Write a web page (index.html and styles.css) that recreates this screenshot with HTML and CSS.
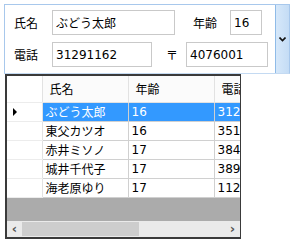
FILE: index.html
```html
<!DOCTYPE html>
<html lang="ja">
<head>
  <meta charset="UTF-8" />
  <meta name="viewport" content="width=device-width, initial-scale=1.0"/>
  <title>会員一覧</title>
  <link rel="stylesheet" href="styles.css">
</head>
<body>

<div class="panel">
  <div class="fields">
    <div class="row">
      <span class="lbl">氏名</span>
      <input class="box name" type="text" value="ぶどう太郎" />
      <span class="lbl age-lbl">年齢</span>
      <input class="box age" type="text" value="16" />
    </div>
    <div class="row">
      <span class="lbl">電話</span>
      <input class="box tel" type="text" value="31291162" />
      <span class="lbl zip-lbl">〒</span>
      <input class="box zip" type="text" value="4076001" />
    </div>
  </div>
  <button class="drop">
    <svg width="7" height="5" viewBox="0 0 7 5"><path d="M0.5 0.5 L3.5 3.5 L6.5 0.5" fill="none" stroke="#111" stroke-width="1.6"/></svg>
  </button>
</div>

<div class="grid">
  <div class="grid-inner">
    <table>
      <colgroup>
        <col class="c-head"><col class="c-col"><col class="c-col"><col class="c-col">
      </colgroup>
      <thead>
        <tr><th class="corner"></th><th>氏名</th><th>年齢</th><th>電話</th></tr>
      </thead>
      <tbody>
        <tr class="sel"><td class="rh"><span class="arrow"></span></td><td>ぶどう太郎</td><td>16</td><td>31291162</td></tr>
        <tr><td class="rh"></td><td>東父カツオ</td><td>16</td><td>35124478</td></tr>
        <tr><td class="rh"></td><td>赤井ミソノ</td><td>17</td><td>38457721</td></tr>
        <tr><td class="rh"></td><td>城井千代子</td><td>17</td><td>38961034</td></tr>
        <tr><td class="rh"></td><td>海老原ゆり</td><td>17</td><td>11258830</td></tr>
      </tbody>
    </table>
    <div class="workspace"></div>
    <div class="hscroll">
      <span class="arr">&lsaquo;</span>
      <div class="track"><div class="thumb"></div></div>
      <span class="arr">&rsaquo;</span>
    </div>
  </div>
</div>

</body>
</html>
```

FILE: styles.css
```css
* {
  margin: 0; padding: 0; box-sizing: border-box;
}

body {
  background: #fff;
  color: #000;
  font-family: 'DejaVu Sans', 'Noto Sans CJK JP', sans-serif;
  font-size: 12px;
}

.panel {
  display: flex;
  margin: 4px 0 0 4px;
  width: 286px;
  height: 70px;
  border: 1px solid #a8c8ec;
  border-bottom-color: #c4daf2;
  background: #fff;
}

.fields {
  flex: 1;
  display: flex;
  flex-direction: column;
  gap: 7px;
  padding: 5px 0 0 9px;
}

.row {
  display: flex;
  align-items: center;
  height: 25px;
}

.lbl {
  width: 38px;
  font-family: 'Noto Sans CJK JP', sans-serif;
}

.age-lbl { width: 37px; margin-left: 18px; }
.zip-lbl { width: 20px; margin-left: 14px; }

.box {
  height: 25px;
  border: 1px solid #c9c9c9;
  background: #fff;
  font: inherit;
  padding: 0 3px;
  color: #000;
  outline: none;
}

.name { width: 123px; }
.age { width: 32px; }
.tel { width: 100px; }
.zip { width: 82px; }

.drop {
  width: 14px;
  height: 100%;
  border: none;
  border-left: 1px solid #8fbbe8;
  background: linear-gradient(to right, #d6e8fa, #c4dcf5);
  display: flex;
  align-items: center;
  justify-content: center;
}

.grid {
  margin-left: 5px;
  width: 236px;
  height: 165px;
  border: 2px solid #3a3a3a;
  border-right-width: 1px;
}

.grid-inner {
  width: 100%;
  height: 100%;
  overflow: hidden;
  display: flex;
  flex-direction: column;
}

table {
  border-collapse: collapse;
  table-layout: fixed;
  width: 293px;
  font-family: 'DejaVu Sans', 'Noto Sans CJK JP', sans-serif;
}

.c-head { width: 35px; }
.c-col { width: 86px; }

th, td {
  text-align: left;
  font-weight: normal;
  white-space: nowrap;
  overflow: hidden;
  border-right: 1px solid #d0d0d0;
  border-bottom: 1px solid #d0d0d0;
}

th {
  height: 26px;
  padding: 0 0 0 7px;
  background: #fbfbfb;
  border-right-color: #e2e2e2;
  border-bottom-color: #e2e2e2;
}

td {
  height: 19px;
  padding: 0 0 0 3px;
  background: #fff;
}

td.rh, th.corner {
  background: #fff;
  border-right-color: #e2e2e2;
  border-bottom-color: #ececec;
  padding: 0;
}

tr.sel td {
  background: #3399ff;
  color: #fff;
}

tr.sel td.rh {
  background: #fff;
}

.arrow {
  display: block;
  margin-left: 6px;
  width: 0;
  height: 0;
  border-top: 4px solid transparent;
  border-bottom: 4px solid transparent;
  border-left: 4px solid #000;
}

.workspace {
  flex: 1;
  background: #ababab;
}

.hscroll {
  height: 16px;
  display: flex;
  align-items: center;
  background: #eaeaea;
}

.arr {
  width: 15px;
  text-align: center;
  font-size: 13px;
  font-weight: bold;
  color: #555;
  line-height: 16px;
}

.track {
  flex: 1;
  height: 100%;
  display: flex;
  align-items: center;
}

.thumb {
  width: 117px;
  height: 14px;
  background: #cdcdcd;
}
```
